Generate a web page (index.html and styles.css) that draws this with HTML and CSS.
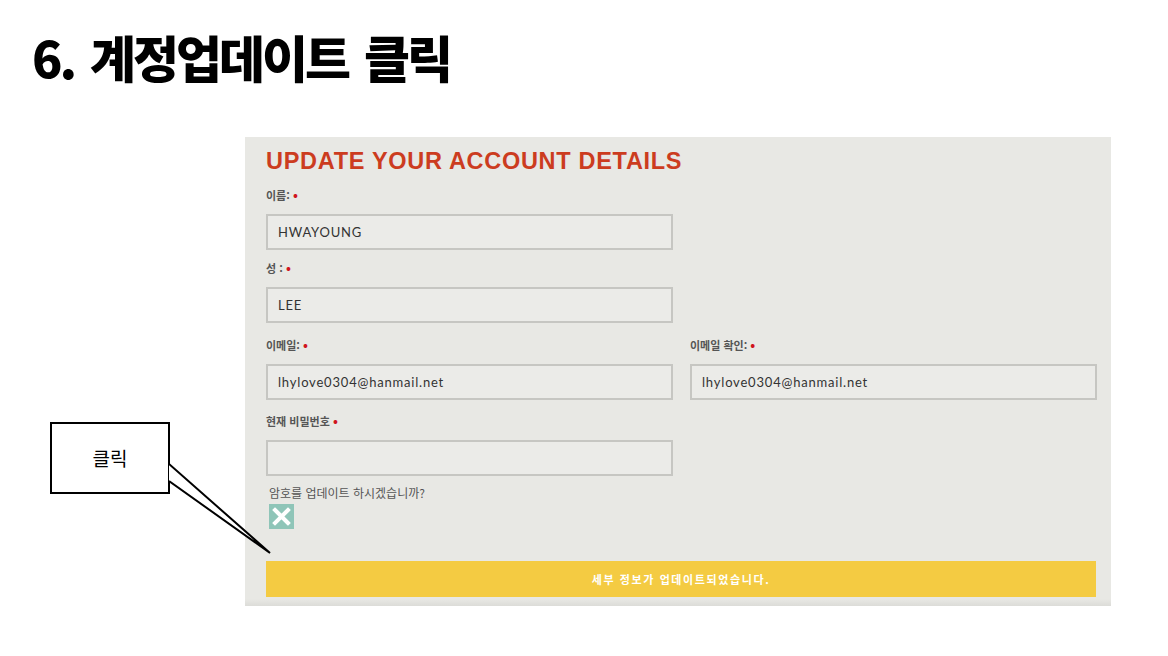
FILE: index.html
```html
<!DOCTYPE html>
<html lang="ko">
<head>
    <meta charset="UTF-8">
    <meta name="viewport" content="width=device-width, initial-scale=1.0">
    <title>6. 계정업데이트 클릭</title>
    <link rel="stylesheet" href="styles.css">
</head>
<body>
    <h1 class="slide-title">6. 계정업데이트 클릭</h1>

    <div class="panel">
        <h2 class="panel-title">UPDATE YOUR ACCOUNT DETAILS</h2>

        <div class="field first">
            <label>이름: <span class="req">•</span></label>
            <div class="input">HWAYOUNG</div>
        </div>
        <div class="field">
            <label>성 : <span class="req">•</span></label>
            <div class="input">LEE</div>
        </div>
        <div class="row">
            <div class="field">
                <label>이메일: <span class="req">•</span></label>
                <div class="input">lhylove0304@hanmail.net</div>
            </div>
            <div class="field">
                <label>이메일 확인: <span class="req">•</span></label>
                <div class="input">lhylove0304@hanmail.net</div>
            </div>
        </div>
        <div class="field">
            <label>현재 비밀번호 <span class="req">•</span></label>
            <div class="input"></div>
        </div>

        <p class="question">암호를 업데이트 하시겠습니까?</p>
        <div class="check">
            <svg width="25" height="25" viewBox="0 0 25 25">
                <rect width="25" height="25" fill="#8fc5b8"/>
                <path d="M6 6 L19 19 M19 6 L6 19" stroke="#fff" stroke-width="4" stroke-linecap="square"/>
            </svg>
        </div>

        <div class="submit">세부 정보가 업데이트되었습니다.</div>
    </div>

    <!-- callout -->
    <div class="callout">클릭</div>
    <svg class="pointer" width="120" height="100" viewBox="0 0 120 100">
        <path d="M0 4 L101 93 L0 21" fill="#fff" stroke="#000" stroke-width="2"/>
    </svg>
</body>
</html>
```

FILE: styles.css
```css
body{
    margin: 0;
    background-color: white;
    font-family: "Noto Sans CJK KR", "Noto Sans", sans-serif;
    position: relative;
    width: 1168px;
    height: 656px;
    overflow: hidden;
}
.slide-title{
    margin: 0;
    padding: 24px 0 0 32px;
    font-size: 50px;
    font-weight: 900;
    line-height: 64px;
    letter-spacing: -3px;
    word-spacing: 5px;
    color: black;
}
.panel{
    box-sizing: border-box;
    margin: 49px 0 0 245px;
    width: 866px;
    height: 469px;
    padding: 10px 15px 0 21px;
    background: linear-gradient(to bottom, #e8e8e4 0, #e8e8e4 462px, #dcdcd8 469px);
}
.panel-title{
    margin: 0;
    font-family: "Liberation Sans", Arial, sans-serif;
    font-size: 23.5px;
    font-weight: bold;
    line-height: 28px;
    color: #cc3c1f;
    letter-spacing: 0.7px;
}
.field label{
    display: block;
    font-size: 11px;
    font-weight: bold;
    line-height: 16px;
    color: #555;
    margin-bottom: 11px;
}
.req{
    color: #d0141c;
    font-size: 13px;
}
.field.first{
    margin-top: 12px;
    margin-bottom: 10px;
}
.field{
    margin-bottom: 14px;
}
.row{
    display: grid;
    grid-template-columns: 407px 407px;
    gap: 17px;
}
.row .field{
    margin-bottom: 13px;
}
.input{
    box-sizing: border-box;
    width: 407px;
    height: 36px;
    border: 2px solid #c6c6c2;
    background-color: #ebebe8;
    padding: 0 10px;
    font-family: Lato, "Noto Sans", sans-serif;
    font-size: 13px;
    letter-spacing: 0.8px;
    line-height: 32px;
    color: #333;
}
.question{
    margin: -5px 0 0 3px;
    font-size: 12px;
    line-height: 16px;
    color: #555;
}
.check{
    margin: 3px 0 0 3px;
    height: 25px;
}
.check svg{
    display: block;
}
.submit{
    margin-top: 32px;
    height: 36px;
    width: 830px;
    background-color: #f4cb42;
    color: white;
    font-size: 11px;
    font-weight: bold;
    letter-spacing: 1.6px;
    line-height: 36px;
    text-align: center;
}
.callout{
    position: absolute;
    left: 50px;
    top: 422px;
    box-sizing: border-box;
    width: 120px;
    height: 72px;
    border: 2px solid black;
    background: white;
    font-size: 19px;
    line-height: 68px;
    text-align: center;
    color: black;
}
.pointer{
    position: absolute;
    left: 169px;
    top: 460px;
}
```
